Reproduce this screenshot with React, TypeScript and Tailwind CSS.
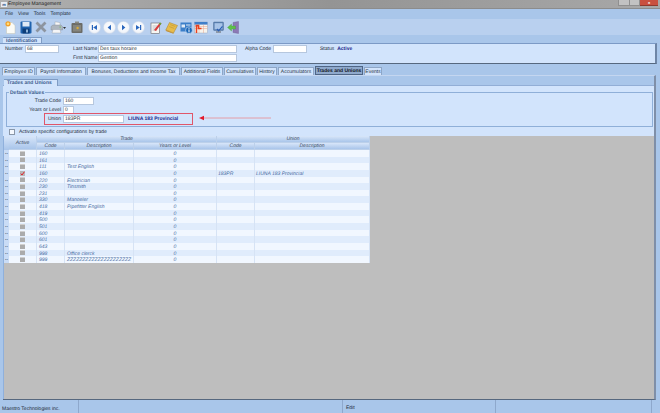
import React from "react";

const sans = "font-['Liberation_Sans',Arial,sans-serif] [text-rendering:geometricPrecision]";

function NavIcon({ kind }: { kind: "first" | "prev" | "next" | "last" }) {
  return (
    <svg width="13" height="13" viewBox="0 0 13 13">
      <defs>
        <radialGradient id={"nav" + kind} cx="0.5" cy="0.45" r="0.6">
          <stop offset="0" stopColor="#ffffff" />
          <stop offset="0.7" stopColor="#f2f5fa" />
          <stop offset="1" stopColor="#cfd9e8" />
        </radialGradient>
      </defs>
      <circle cx="6.5" cy="6.5" r="6.2" fill={"url(#nav" + kind + ")"} stroke="#c3d2e8" strokeWidth="0.5" />
      {kind === "first" && <><rect x="3.8" y="4" width="1.2" height="5" fill="#2a66bd" /><path d="M9 4v5L5.2 6.5z" fill="#2a66bd" /></>}
      {kind === "prev" && <path d="M8 3.8v5.4L4.6 6.5z" fill="#2a66bd" />}
      {kind === "next" && <path d="M5 3.8v5.4L8.4 6.5z" fill="#2a66bd" />}
      {kind === "last" && <><rect x="8" y="4" width="1.2" height="5" fill="#2a66bd" /><path d="M4 4v5L7.8 6.5z" fill="#2a66bd" /></>}
    </svg>
  );
}

function Toolbar() {
  return (
    <div className="h-[16px] bg-[#b9d0ef] flex items-center pl-[5px]">
      <svg width="11" height="13" viewBox="0 0 11 13">
        <path d="M1.5 1.5h5.5l3 3v8H1.5z" fill="#fbfbf6" stroke="#c4c4b4" strokeWidth="0.5" />
        <circle cx="3" cy="2.8" r="2.6" fill="#f2a02a" />
        <circle cx="3" cy="2.8" r="1.3" fill="#ffdf80" />
      </svg>
      <svg className="ml-[4px]" width="12" height="13" viewBox="0 0 12 13">
        <rect x="0.5" y="0.5" width="11" height="12" rx="1" fill="#1f62ad" />
        <rect x="2.5" y="1" width="7" height="4.5" fill="#dfeaf6" />
        <rect x="2.5" y="7.5" width="7" height="5" fill="#0d3d78" />
        <rect x="6" y="8.5" width="2" height="3" fill="#8fb3d9" />
      </svg>
      <svg className="ml-[3px]" width="12" height="12" viewBox="0 0 12 12">
        <path d="M1.5 1.5L10.5 10.5M10.5 1.5L1.5 10.5" stroke="#8d95a0" strokeWidth="2.8" />
      </svg>
      <svg className="ml-[3px]" width="13" height="13" viewBox="0 0 13 13">
        <path d="M5 0.8l5 0.8v3H5z" fill="#f7f7f7" stroke="#8f98a3" strokeWidth="0.4" />
        <path d="M1 5.5l2-1.5h8l1.5 1.5v3.5H1z" fill="#aeb6bf" stroke="#7e8791" strokeWidth="0.4" />
        <path d="M3 8.5h7l1 3.5H2z" fill="#f4f5f7" stroke="#8f98a3" strokeWidth="0.4" />
        <rect x="9.5" y="5.6" width="1.5" height="0.9" fill="#6fbf5a" />
      </svg>
      <svg width="3" height="13" viewBox="0 0 3 13"><path d="M0 6h3L1.5 8z" fill="#333" /></svg>
      <svg className="ml-[5px]" width="12" height="13" viewBox="0 0 12 13">
        <rect x="0.5" y="2" width="11" height="10" rx="1" fill="#6b6b66" />
        <rect x="4" y="0.5" width="4" height="1.8" fill="#8a8a84" />
        <rect x="2" y="4" width="8" height="6.5" fill="#85857d" />
        <circle cx="6.6" cy="7" r="1.2" fill="#d7ab3a" />
      </svg>
      <div className="ml-[5px] flex gap-[1.6px]">
        <NavIcon kind="first" />
        <NavIcon kind="prev" />
        <NavIcon kind="next" />
        <NavIcon kind="last" />
      </div>
      <svg className="ml-[5px]" width="12" height="13" viewBox="0 0 12 13">
        <rect x="1" y="2" width="8.5" height="10.5" fill="#f6f6f2" stroke="#66666e" strokeWidth="0.6" />
        <path d="M2.5 5h5M2.5 7h5M2.5 9h4" stroke="#8b8b95" strokeWidth="0.5" />
        <path d="M4 9L10 1.5l1.5 1L6 10z" fill="#d93b3b" />
        <path d="M8.8 3L10 1.5l1.5 1-1.2 1.6z" fill="#5fae3a" />
      </svg>
      <svg className="ml-[3px]" width="13" height="13" viewBox="0 0 13 13">
        <path d="M4.5 1.5l8 3-4 7.5L0.8 9z" fill="#e6bb4c" stroke="#a9802a" strokeWidth="0.5" />
        <path d="M5.2 3.6l5 1.8M4.2 5.6l5 1.8" stroke="#b58d2d" strokeWidth="0.5" />
        <path d="M0.8 9l7.7 3 0 0.8L0.8 10z" fill="#c78f2b" />
      </svg>
      <svg className="ml-[2px]" width="13" height="13" viewBox="0 0 13 13">
        <rect x="0.5" y="1.5" width="11" height="9" fill="#3b7fc9" />
        <rect x="1.5" y="3.5" width="3.5" height="3" fill="#dfeaf6" />
        <rect x="6" y="3.5" width="4.5" height="1" fill="#dfeaf6" />
        <circle cx="9" cy="9.2" r="3.4" fill="#1765b8" stroke="#fff" strokeWidth="0.5" />
        <rect x="8.5" y="8.4" width="1" height="3" fill="#fff" />
        <rect x="8.5" y="6.8" width="1" height="1" fill="#fff" />
      </svg>
      <svg className="ml-[1px]" width="14" height="13" viewBox="0 0 14 13">
        <rect x="0.5" y="1" width="13" height="11" fill="#f7f3ec" stroke="#8a9bb5" strokeWidth="0.4" />
        <rect x="0.5" y="1" width="13" height="2.6" fill="#3f7fca" />
        <path d="M0.5 5.5h13M0.5 7.5h13M5 3.6v8.4M9.5 3.6v8.4" stroke="#e5a48e" strokeWidth="0.5" />
        <path d="M1.5 4.5h3v3h3M2.5 5v7" stroke="#e8401f" strokeWidth="1.5" fill="none" />
      </svg>
      <svg className="ml-[5px]" width="11" height="13" viewBox="0 0 11 13">
        <rect x="0.5" y="1" width="10" height="8.5" rx="0.7" fill="#5d83b4" stroke="#3f5f8a" strokeWidth="0.4" />
        <rect x="1.6" y="2.2" width="7.8" height="6" fill="#a8c4e8" />
        <rect x="3" y="10" width="5" height="2" fill="#8d99a9" />
        <path d="M4 8l1.6 1.8L9.5 5.4" stroke="#2b5fb5" strokeWidth="1.2" fill="none" />
      </svg>
      <svg className="ml-[3px]" width="12" height="13" viewBox="0 0 12 13">
        <path d="M6 1.5L11.5 0.5v12l-5.5-1z" fill="#8c79b5" stroke="#6b5a92" strokeWidth="0.4" />
        <path d="M0.5 6.5L4.5 3v2h4v3h-4v2z" fill="#5fc04a" stroke="#3f8f31" strokeWidth="0.3" />
      </svg>
    </div>
  );
}

function Label({ w, children }: { w: string; children: React.ReactNode }) {
  return <span className={w + " text-right text-[5px] leading-[8px] text-[#222b38] shrink-0 whitespace-nowrap"}>{children}</span>;
}

function Input({ w, value }: { w: string; value?: string }) {
  return (
    <div className={w + " h-[8px] bg-white border border-[#b6c7de] text-[5px] leading-[6px] pl-[1px] text-[#2a3340] overflow-hidden whitespace-nowrap"}>
      {value}
    </div>
  );
}

function Identification() {
  return (
    <div className="mt-[2px]">
      <div className="pl-[3px] h-[6px] flex">
        <div className="w-[39px] h-[6px] bg-[#d2e4fc] border-t border-r border-[#7f9cc4] rounded-t-[1px] text-[5px] leading-[6px] pl-[3px] font-bold text-[#3a5a8c]">
          Identification
        </div>
      </div>
      <div className="mr-[3px] h-[21px] bg-[#d2e4fc] border-t border-[#7c9ac6] border-r-2 border-r-[#6e85a6] border-b border-b-[#56687f] flex pt-[1px]">
        <div className="w-[25px] pl-[5px] text-[5px] leading-[8px] text-[#222b38]">Number</div>
        <Input w="w-[34px]" value="68" />
        <div className="w-[39px] pl-[14px] flex flex-col gap-[1px] text-[5px] leading-[8px] text-[#222b38]">
          <span className="whitespace-nowrap">Last Name</span>
          <span className="whitespace-nowrap">First Name</span>
        </div>
        <div className="flex flex-col gap-[1px]">
          <Input w="w-[139px]" value="Des taux horaire" />
          <Input w="w-[139px]" value="Gestion" />
        </div>
        <div className="w-[36px] pl-[8px] text-[5px] leading-[8px] text-[#222b38] whitespace-nowrap">Alpha Code</div>
        <Input w="w-[34px]" />
        <div className="ml-[13px] text-[5px] leading-[8px] text-[#222b38]">Status</div>
        <div className="ml-[3px] text-[5px] leading-[8px] font-bold text-[#1c2a8c]">Active</div>
      </div>
    </div>
  );
}

const tabs: [string, string][] = [
  ["Employee ID", "w-[33px]"],
  ["Payroll Information", "w-[50px]"],
  ["Bonuses, Deductions and Income Tax", "w-[93px]"],
  ["Additional Fields", "w-[42px]"],
  ["Cumulatives", "w-[32px]"],
  ["History", "w-[20px]"],
  ["Accumulators", "w-[36px]"],
];

function Tabs() {
  return (
    <div className="mt-[2px] h-[9px] pl-[2px] flex items-end gap-[1px]">
      {tabs.map(([t, w]) => (
        <div key={t} className={w + " h-[8px] bg-[#d2e4fc] border-t border-x border-[#8ea6c6] text-center text-[5px] leading-[9px] text-[#27323f] whitespace-nowrap"}>
          {t}
        </div>
      ))}
      <div className="w-[48px] h-[9px] bg-[#8fa9cc] border border-[#4f6686] text-center text-[5px] leading-[8px] font-bold text-[#10151d] whitespace-nowrap">
        Trades and Unions
      </div>
      <div className="w-[18px] h-[8px] bg-[#d2e4fc] border-t border-x border-[#8ea6c6] text-center text-[5px] leading-[9px] text-[#27323f]">
        Events
      </div>
    </div>
  );
}

function Arrow() {
  return (
    <svg className="ml-[6px] mb-[3px]" width="72" height="6" viewBox="0 0 72 6">
      <path d="M2 3H72" stroke="#e88a92" strokeWidth="0.8" />
      <path d="M0 3L5 0.8V5.2z" fill="#e3192b" />
    </svg>
  );
}

function DefaultValues() {
  return (
    <div className="relative ml-[3px] mr-[1px] mt-[6px] h-[35px] border border-[#8fafd8]">
      <span className="absolute left-[2px] -top-[3px] px-[1px] bg-[#d2e4fc] text-[5px] leading-[6px] text-[#3a5a8c] font-bold whitespace-nowrap">Default Values</span>
      <div className="pt-[3.5px] flex flex-col">
        <div className="flex items-center h-[9px]">
          <Label w="w-[54px]">Trade Code</Label>
          <div className="ml-[2px]"><Input w="w-[31px]" value="160" /></div>
        </div>
        <div className="flex items-center h-[9px]">
          <Label w="w-[54px]">Years or Level</Label>
          <div className="ml-[2px]"><Input w="w-[11px]" value="0" /></div>
        </div>
        <div className="flex items-center -mt-[1.5px]">
          <div className="ml-[37px] w-[149px] h-[12px] border border-[#e0566a] flex items-center">
            <Label w="w-[16px]">Union</Label>
            <div className="ml-[2px]"><Input w="w-[61px]" value="183PR" /></div>
            <span className="ml-[4px] text-[5px] leading-[8px] font-bold text-[#1c2a8c] whitespace-nowrap">LIUNA 183 Provincial</span>
          </div>
          <Arrow />
        </div>
      </div>
    </div>
  );
}

const rows: [string, string, string, string][] = [
  ["160", "", "", ""],
  ["161", "", "", ""],
  ["111", "Test English", "", ""],
  ["160", "", "183PR", "LIUNA 183 Provincial"],
  ["220", "Electrician", "", ""],
  ["230", "Tinsmith", "", ""],
  ["231", "", "", ""],
  ["330", "Manoeler", "", ""],
  ["418", "Pipefitter English", "", ""],
  ["419", "", "", ""],
  ["500", "", "", ""],
  ["501", "", "", ""],
  ["600", "", "", ""],
  ["601", "", "", ""],
  ["643", "", "", ""],
  ["998", "Office clerck", "", ""],
  ["999", "ZZZZZZZZZZZZZZZZZZZZZ", "", ""],
];

const headCell = "bg-gradient-to-b from-[#d8e6f9] to-[#a9c5ea] border-r border-b border-[#bcd0ea] text-center text-[5px] leading-[6px] italic text-[#3b4a60] flex items-center justify-center";
const cellBase = "h-[6.65px] border-r border-[#d6e3f5] text-[5px] leading-[8px] italic text-[#44689e] whitespace-nowrap";

function Grid() {
  return (
    <div className="flex-1 bg-[#bebebe] overflow-hidden border-l border-[#8fb0dc]">
      <div className="w-[366px] grid grid-cols-[5px_28px_28px_69px_83px_38px_115px]">
        <div className="row-span-2 bg-gradient-to-b from-[#d8e6f9] to-[#a9c5ea]" />
        <div className={headCell + " row-span-2"}>Active</div>
        <div className={headCell + " col-span-3 h-[7px]"}>Trade</div>
        <div className={headCell + " col-span-2 h-[7px]"}>Union</div>
        <div className={headCell + " h-[7px]"}>Code</div>
        <div className={headCell + " h-[7px]"}>Description</div>
        <div className={headCell + " h-[7px]"}>Years or Level</div>
        <div className={headCell + " h-[7px]"}>Code</div>
        <div className={headCell + " h-[7px]"}>Description</div>
        {rows.map((r, i) => {
          const bg = i % 2 === 0 ? "bg-[#f1f7ff]" : "bg-[#e0ecfc]";
          return (
            <React.Fragment key={i}>
              <div className="h-[6.65px] bg-[#c9dcf6] text-[5px] leading-[6px] text-[#31405a] text-center overflow-hidden font-bold">..</div>
              <div className={cellBase + " " + bg + " flex items-center justify-center"}>
                {i === 3 ? (
                  <svg width="5" height="5" viewBox="0 0 5 5">
                    <rect x="0" y="0" width="5" height="5" fill="#b7b7b7" />
                    <path d="M0.8 2.6L2 4L4.4 0.8" stroke="#e01f2d" strokeWidth="1" fill="none" />
                  </svg>
                ) : (
                  <div className="w-[5px] h-[5px] bg-[#ababab] border-t border-[#d0d0d0]" />
                )}
              </div>
              <div className={cellBase + " " + bg + " pl-[2px]"}>{r[0]}</div>
              <div className={cellBase + " " + bg + " pl-[2px]"}>{r[1]}</div>
              <div className={cellBase + " " + bg + " text-center"}>0</div>
              <div className={cellBase + " " + bg + " pl-[1px]"}>{r[2]}</div>
              <div className={cellBase + " " + bg + " pl-[1px]"}>{r[3]}</div>
            </React.Fragment>
          );
        })}
      </div>
    </div>
  );
}

function TradesPanel() {
  return (
    <div className="ml-[3px] mr-[4px] flex-1 flex flex-col min-h-0 border-r-2 border-r-[#7f8fa8] border-b border-b-[#56687f] border-t border-t-[#c4d6f0]">
      <div className="h-[10px] bg-[#a9c6ea] border-b border-[#92aed6] pl-[1px] pt-[3px]">
        <div className="w-[54px] h-[7px] bg-[#d2e4fc] border-t border-r border-[#7f9cc4] text-[5px] leading-[6px] font-bold text-[#3a5a8c] pl-[3px] whitespace-nowrap">
          Trades and Unions
        </div>
      </div>
      <div className="h-[50px] bg-[#d2e4fc] flex flex-col">
        <DefaultValues />
        <div className="mt-[2px] pl-[6px] flex items-center">
          <div className="w-[6px] h-[6px] bg-[#f4f8fe] border border-[#8a97a8]" />
          <span className="ml-[4px] text-[5px] leading-[6px] text-[#222b38] whitespace-nowrap">Activate specific configurations by trade</span>
        </div>
      </div>
      <Grid />
    </div>
  );
}

function StatusBar() {
  return (
    <div className="h-[13px] flex text-[5px] leading-[8px] text-[#222b38]">
      <div className="w-[79px] pl-[2px] pt-[5px] border-r border-[#8ea8cc] whitespace-nowrap">Maestro Technologies inc.</div>
      <div className="w-[264px] border-r border-[#8ea8cc]" />
      <div className="w-[153px] pl-[3px] pt-[4px] border-r border-[#8ea8cc]">Edit</div>
      <div className="w-[156px] border-r border-[#8ea8cc]" />
    </div>
  );
}

export default function App() {
  return (
    <div className={sans + " w-[660px] h-[413px] bg-[#a9c6ea] flex flex-col overflow-hidden"}>
      <div className="h-[9px] bg-gradient-to-r from-[#b0b0b0] via-[#949494] to-[#a8a8a8] border-b border-[#8c8c8c] flex items-center">
        <span className="ml-[1px] w-[6px] h-[5px] bg-[#e8ecf2] text-[4px] leading-[5px] font-bold text-[#2c4a86] text-center">m</span>
        <span className="ml-[1px] text-[5px] leading-[8px] text-[#1e1e1e]">Employee Management</span>
        <div className="ml-auto mr-[2px] flex h-[6px] self-start">
          <div className="w-[12px] bg-[#c2c2c2] border-x border-b border-[#8f8f8f]" />
          <div className="w-[10px] bg-[#c2c2c2] border-r border-b border-[#8f8f8f]" />
          <div className="w-[18px] bg-[#c9503f] border-b border-[#8f3a2e] text-white text-[4px] leading-[5px] text-center font-bold">x</div>
        </div>
      </div>
      <div className="h-[10px] flex items-center gap-[5px] pl-[5px] text-[5px] leading-[8px] text-[#222b38]">
        <span>File</span>
        <span>View</span>
        <span>Tools</span>
        <span>Template</span>
      </div>
      <Toolbar />
      <Identification />
      <Tabs />
      <TradesPanel />
      <StatusBar />
    </div>
  );
}
